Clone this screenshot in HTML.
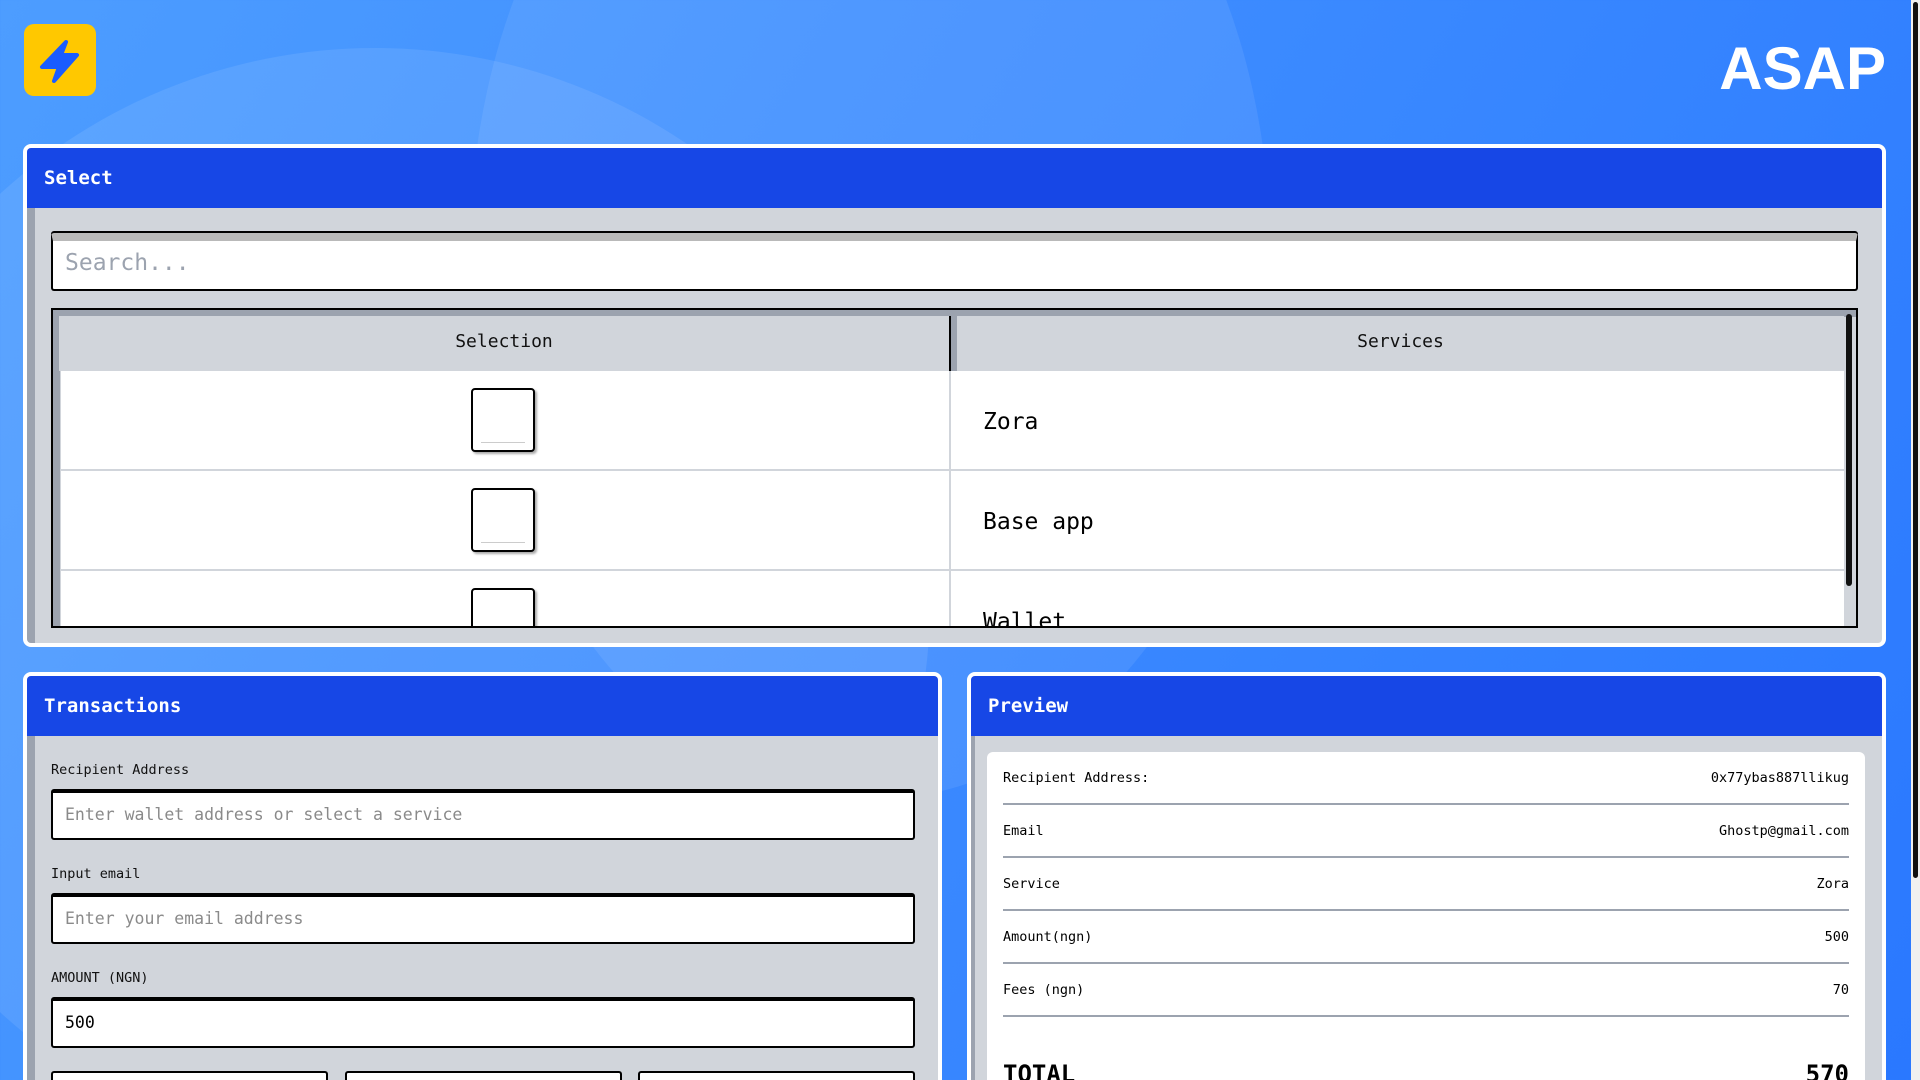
<!DOCTYPE html>
<html><head><meta charset="utf-8">
<style>
*{box-sizing:border-box;margin:0;padding:0}
html,body{width:1920px;height:1080px;overflow:hidden}
body{position:relative;font-family:"DejaVu Sans Mono","Liberation Mono",monospace;background:linear-gradient(120deg,#4d9dff 0%,#3d8cff 45%,#2a78ff 100%);}
.c1{position:absolute;left:-180px;top:48px;width:1110px;height:1110px;border-radius:50%;background:rgba(255,255,255,0.09)}
.c2{position:absolute;left:470px;top:-300px;width:800px;height:1100px;border-radius:50%;background:rgba(255,255,255,0.08)}
.sb{position:absolute;right:0;top:0;width:9px;height:1080px;background:#f0f0f0}
.sb i{position:absolute;left:2px;top:2px;width:5px;height:876px;background:#111;border-radius:3px}
.logo{position:absolute;left:24px;top:24px;width:72px;height:72px;background:#ffc800;border-radius:10px}
.asap{position:absolute;right:34px;top:34px;font-family:"Liberation Sans",sans-serif;font-weight:bold;font-size:60px;color:#fff}
.panel{position:absolute;background:#d1d5db;border:4px solid #fff;border-radius:8px;overflow:hidden}
.panel .hd{height:60px;background:#1747e6;color:#fff;font-weight:bold;font-size:19px;padding-left:17px;line-height:60px}
.panel .bd{position:absolute;left:0;top:60px;right:0;bottom:0;border-left:8px solid #9ca3af}
.search{position:absolute;left:51px;top:233px;width:1807px;height:58px;background:#fff;border:2px solid #000;border-top:8px solid #b9b9b9;box-shadow:0 -2px 0 #000;border-radius:3px;font-size:23px;color:#9ca3af;padding-left:12px;line-height:44px}
.tbl{position:absolute;left:51px;top:308px;width:1807px;height:320px;border:2px solid #000;background:#d1d5db;overflow:hidden}
.tbl .th{position:absolute;left:6px;top:6px;right:12px;height:55px;background:#d1d5db;font-size:18px;color:#111}
.tbl .topstrip{position:absolute;left:0;top:0;right:0;height:7px;background:#9ca3af}
.tbl .leftstrip{position:absolute;left:0;top:0;width:7px;bottom:0;background:#9ca3af}
.th span{position:absolute;top:0;line-height:52px;text-align:center}
.row{position:absolute;left:8px;right:12px;height:100px;background:#fff;border-bottom:2px solid #d1d5db}
.cb{position:absolute;left:410px;width:64px;height:64px;border:2px solid #000;border-radius:4px;background:#fff;box-shadow:2px 2px 2px #aaa}
.cb:after{content:"";position:absolute;left:8px;right:8px;bottom:7px;height:1px;background:#ccc}
.row .sv{position:absolute;left:922px;font-size:23px;color:#000}
.vdiv{position:absolute;left:896px;width:2px;bottom:0;background:#d1d5db}
.isb{position:absolute;right:4px;top:4px;width:6px;height:272px;background:#111;border-radius:3px}
.lbl{position:absolute;left:51px;font-size:13.5px;color:#111}
.inp{position:absolute;left:51px;width:864px;height:51px;background:#fff;border:2px solid #000;border-top:4px solid #000;border-radius:3px;font-size:16.5px;color:#8a8a8a;padding-left:12px;line-height:44px}
.btn{position:absolute;top:1071px;height:9px;background:#fff;border:2px solid #000;border-bottom:none;border-radius:3px 3px 0 0}
.card{position:absolute;left:987px;top:752px;width:878px;height:328px;background:#fff;border-radius:6px 6px 0 0;overflow:hidden}
.pr{position:absolute;left:16px;right:16px;height:53px;border-bottom:2px solid #9ca3af;font-size:13.5px;color:#000}
.pr span{position:absolute;top:18px}
.pr .r{right:0}
</style></head><body>
<div class="c1"></div><div class="c2"></div>
<div class="logo"><svg width="72" height="72" viewBox="0 0 72 72"><path d="M42 18 L18 43 L35 43 L30 57 L53 31 L37 31 Z" fill="#1a5cff" stroke="#1a5cff" stroke-width="4" stroke-linejoin="round"/></svg></div>
<div class="asap">ASAP</div>

<div class="panel" style="left:23px;top:144px;width:1863px;height:503px">
<div class="hd">Select</div><div class="bd"></div>
</div>
<div class="search">Search...</div>
<div class="tbl">
<div class="topstrip"></div><div class="leftstrip"></div>
<div class="th"><span style="left:0;width:890px">Selection</span><span style="left:898px;right:0">Services</span><div style="position:absolute;left:890px;top:0;width:2px;height:55px;background:#000"></div><div style="position:absolute;left:892px;top:0;width:6px;height:55px;background:#9ca3af"></div></div>
<div class="row" style="top:61px"><div class="cb" style="top:17px"></div><div class="sv" style="top:38px">Zora</div></div>
<div class="row" style="top:161px"><div class="cb" style="top:17px"></div><div class="sv" style="top:38px">Base app</div></div>
<div class="row" style="top:261px"><div class="cb" style="top:17px"></div><div class="sv" style="top:38px">Wallet</div></div>
<div class="vdiv" style="top:61px"></div>
<div class="isb"></div>
</div>

<div class="panel" style="left:23px;top:672px;width:919px;height:420px">
<div class="hd">Transactions</div><div class="bd"></div>
</div>
<div class="lbl" style="top:762px">Recipient Address</div>
<div class="inp" style="top:789px">Enter wallet address or select a service</div>
<div class="lbl" style="top:866px">Input email</div>
<div class="inp" style="top:893px">Enter your email address</div>
<div class="lbl" style="top:970px">AMOUNT (NGN)</div>
<div class="inp" style="top:997px;color:#000">500</div>
<div class="btn" style="left:51px;width:277px"></div>
<div class="btn" style="left:345px;width:277px"></div>
<div class="btn" style="left:638px;width:277px"></div>

<div class="panel" style="left:967px;top:672px;width:919px;height:420px">
<div class="hd">Preview</div><div class="bd" style="border-left-width:4px"></div>
</div>
<div class="card">
<div class="pr" style="top:0"><span>Recipient Address:</span><span class="r">0x77ybas887llikug</span></div>
<div class="pr" style="top:53px"><span>Email</span><span class="r">Ghostp@gmail.com</span></div>
<div class="pr" style="top:106px"><span>Service</span><span class="r">Zora</span></div>
<div class="pr" style="top:159px"><span>Amount(ngn)</span><span class="r">500</span></div>
<div class="pr" style="top:212px"><span>Fees (ngn)</span><span class="r">70</span></div>
<div style="position:absolute;left:16px;right:16px;top:308px;font-size:24px;font-weight:bold"><span>TOTAL</span><span style="position:absolute;right:0">570</span></div>
</div>

<div class="sb"><i></i></div>
</body></html>
